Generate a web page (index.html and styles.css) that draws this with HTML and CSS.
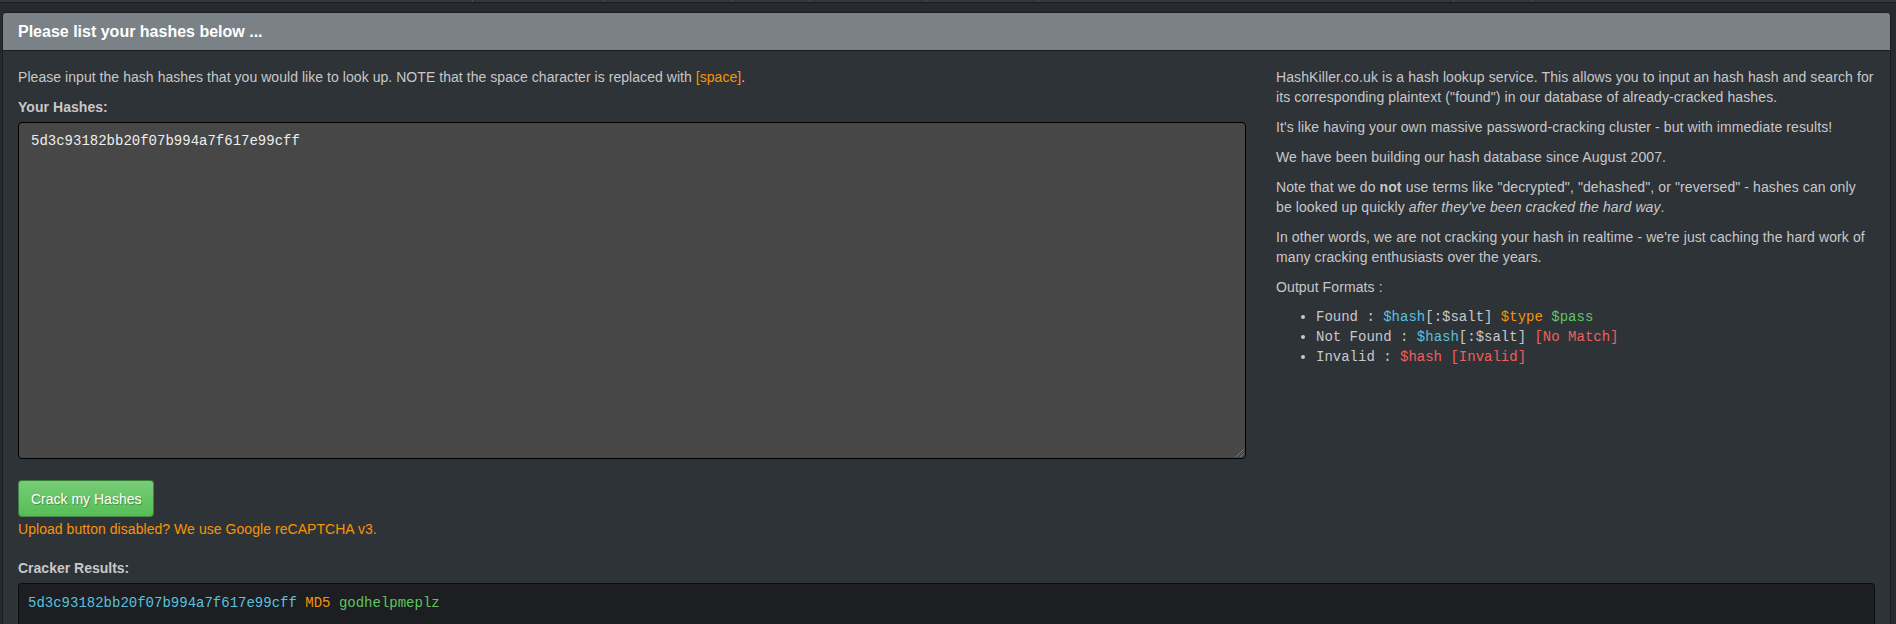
FILE: index.html
```html
<!DOCTYPE html>
<html>
<head>
<meta charset="utf-8">
<link rel="stylesheet" href="styles.css">
</head>
<body>
<div class="navbar">
  <span class="nav-item" style="width:473px"></span>
  <span class="nav-item" style="width:132px"></span>
  <span class="nav-item" style="width:127px"></span>
  <span class="nav-item" style="width:78px"></span>
  <span class="nav-item" style="width:117px"></span>
  <span class="nav-item" style="width:112px"></span>
  <span class="nav-item" style="width:415px"></span>
  <span class="nav-item" style="width:78px"></span>
</div>
<div class="container">
  <div class="panel">
    <div class="panel-heading">Please list your hashes below ...</div>
    <div class="panel-body">
      <div class="row">
        <div class="col-left">
          <p>Please input the hash hashes that you would like to look up. NOTE that the space character is replaced with <span class="warn">[space]</span>.</p>
          <label class="label">Your Hashes:</label>
          <div class="textarea">5d3c93182bb20f07b994a7f617e99cff<span class="grip"></span></div>
          <div class="actions">
            <button class="btn-success">Crack my Hashes</button>
            <div class="warn">Upload button disabled? We use Google reCAPTCHA v3.</div>
          </div>
        </div>
        <div class="col-right">
          <p>HashKiller.co.uk is a hash lookup service. This allows you to input an hash hash and search for its corresponding plaintext ("found") in our database of already-cracked hashes.</p>
          <p>It's like having your own massive password-cracking cluster - but with immediate results!</p>
          <p>We have been building our hash database since August 2007.</p>
          <p>Note that we do <b>not</b> use terms like "decrypted", "dehashed", or "reversed" - hashes can only be looked up quickly <i>after they've been cracked the hard way</i>.</p>
          <p>In other words, we are not cracking your hash in realtime - we're just caching the hard work of many cracking enthusiasts over the years.</p>
          <p>Output Formats :</p>
          <ul class="formats">
            <li>Found : <span class="info">$hash</span>[:$salt] <span class="warn">$type</span> <span class="ok">$pass</span></li>
            <li>Not Found : <span class="info">$hash</span>[:$salt] <span class="bad">[No Match]</span></li>
            <li>Invalid : <span class="bad">$hash</span> <span class="bad">[Invalid]</span></li>
          </ul>
        </div>
      </div>
      <label class="label results-label">Cracker Results:</label>
      <pre class="results"><span class="info">5d3c93182bb20f07b994a7f617e99cff</span> <span class="warn">MD5</span> <span class="ok">godhelpmeplz</span></pre>
    </div>
  </div>
</div>
</body>
</html>
```
FILE: styles.css
```css
html, body {
  margin: 0;
  padding: 0;
}
body {
  background: #272b30;
  color: #c8c8c8;
  font-family: "Liberation Sans", Arial, Helvetica, sans-serif;
  font-size: 14px;
  line-height: 20px;
  height: 624px;
  overflow: hidden;
}
.navbar {
  display: flex;
  height: 2px;
  background: #33383d;
  border-bottom: 1px solid #1c1e22;
}
.nav-item {
  flex: none;
  height: 2px;
  box-sizing: border-box;
  border-right: 1px solid #4a4f54;
}
.container {
  padding: 9px 5px 0 2px;
}
.panel {
  background: #2e3338;
  border: 1px solid #1c1e22;
  border-radius: 4px;
}
.panel-heading {
  background: #7a8288;
  color: #fff;
  font-weight: bold;
  font-size: 16px;
  line-height: 17px;
  padding: 10px 15px 10px 15px;
  border-bottom: 1px solid #1c1e22;
  border-radius: 3px 3px 0 0;
}
.panel-body {
  padding: 16px 15px 15px;
}
.row {
  display: flex;
  margin: 0 -15px;
}
.col-left {
  flex: 0 0 66.6667%;
  box-sizing: border-box;
  padding: 0 15px;
  letter-spacing: 0.05px;
}
.col-right {
  flex: 0 0 33.3333%;
  box-sizing: border-box;
  padding: 0 15px;
  letter-spacing: 0.1px;
}
p {
  margin: 0 0 10px;
}
.label {
  display: block;
  font-weight: bold;
  margin-bottom: 5px;
}
.textarea {
  position: relative;
  box-sizing: border-box;
  height: 337px;
  background: #474747;
  border: 1px solid #000;
  border-radius: 4px;
  padding: 8px 12px;
  color: #eee;
  font-family: "Liberation Mono", "Courier New", monospace;
  font-size: 14px;
  line-height: 20px;
  letter-spacing: 0;
}
.grip {
  position: absolute;
  right: 1px;
  bottom: 1px;
  width: 10px;
  height: 10px;
  background: repeating-linear-gradient(135deg, transparent 0 2px, #777 2px 3px);
  clip-path: polygon(100% 0, 100% 100%, 0 100%);
}
.actions {
  margin-top: 21px;
}
.btn-success {
  display: block;
  height: 37px;
  padding: 7px 12px;
  border: 1px solid rgba(0,0,0,0.35);
  border-radius: 4px;
  background: linear-gradient(#78cc78, #62c462 60%, #56bd56);
  color: #fff;
  font-family: "Liberation Sans", Arial, sans-serif;
  font-size: 14px;
  line-height: 20px;
  letter-spacing: 0;
  text-shadow: 1px 1px 1px rgba(0,0,0,0.3);
  margin-bottom: 2px;
}
.warn { color: #f89406; }
.info { color: #5bc0de; }
.ok { color: #62c462; }
.bad { color: #ee5f5b; }
.results-label {
  margin-top: 19px;
}
.results {
  margin: 0;
  background: #1c1e22;
  border: 1px solid rgba(0,0,0,0.6);
  border-radius: 4px;
  padding: 9px;
  height: 60px;
  font-family: "Liberation Mono", "Courier New", monospace;
  font-size: 14px;
  line-height: 20px;
  color: #c8c8c8;
}
.formats {
  margin: 0 0 10px;
  padding-left: 40px;
  font-family: "Liberation Mono", "Courier New", monospace;
  font-size: 14px;
  line-height: 20px;
  letter-spacing: 0;
}
```
